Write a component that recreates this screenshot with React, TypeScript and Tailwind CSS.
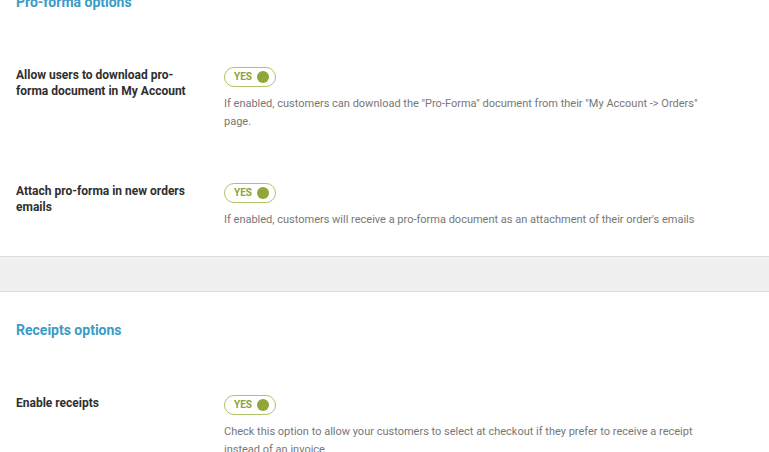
import React from "react";

function Toggle() {
  return (
    <div className="flex h-[20px] w-[52px] items-center justify-between rounded-full border-[1.5px] border-[#adc56a] bg-white pl-[9px] pr-[6px]">
      <span className="text-[10px] font-bold leading-none text-[#8aa43a]">YES</span>
      <span className="h-[12px] w-[12px] rounded-full bg-[#8ea738]" />
    </div>
  );
}

function Row({ label, desc }: { label: React.ReactNode; desc: React.ReactNode }) {
  return (
    <div className="flex pb-[27px] pt-[25px]">
      <div className="w-[224px] shrink-0 pl-[16px] pr-[30px]">
        <div className="text-[12px] font-bold leading-[16px] text-[#2f2f2f]">{label}</div>
      </div>
      <div className="flex flex-col gap-[8px]">
        <Toggle />
        <p className="max-w-[482px] text-[11px] leading-[18px] text-[#777777]">{desc}</p>
      </div>
    </div>
  );
}

export default function App() {
  return (
    <div
      className="min-h-[452px] w-full overflow-hidden bg-white"
      style={{ fontFamily: "Roboto, 'Noto Sans', sans-serif" }}
    >
      <section className="-mt-[8px] pt-0">
        <h2 className="pl-[16px] text-[14px] font-bold leading-[20px] text-[#3a9bc6]">Pro-forma options</h2>
        <div className="h-[30px]" />
        <Row
          label="Allow users to download pro-forma document in My Account"
          desc={'If enabled, customers can download the "Pro-Forma" document from their "My Account -> Orders" page.'}
        />
        <Row
          label="Attach pro-forma in new orders emails"
          desc="If enabled, customers will receive a pro-forma document as an attachment of their order's emails"
        />
      </section>
      <div className="h-[36px] border-y border-[#dcdcdc] bg-[#f0f0f0]" />
      <section className="pt-[28px]">
        <h2 className="pl-[16px] text-[14px] font-bold leading-[20px] text-[#3a9bc6]">Receipts options</h2>
        <div className="h-[30px]" />
        <Row
          label="Enable receipts"
          desc="Check this option to allow your customers to select at checkout if they prefer to receive a receipt instead of an invoice"
        />
      </section>
    </div>
  );
}
